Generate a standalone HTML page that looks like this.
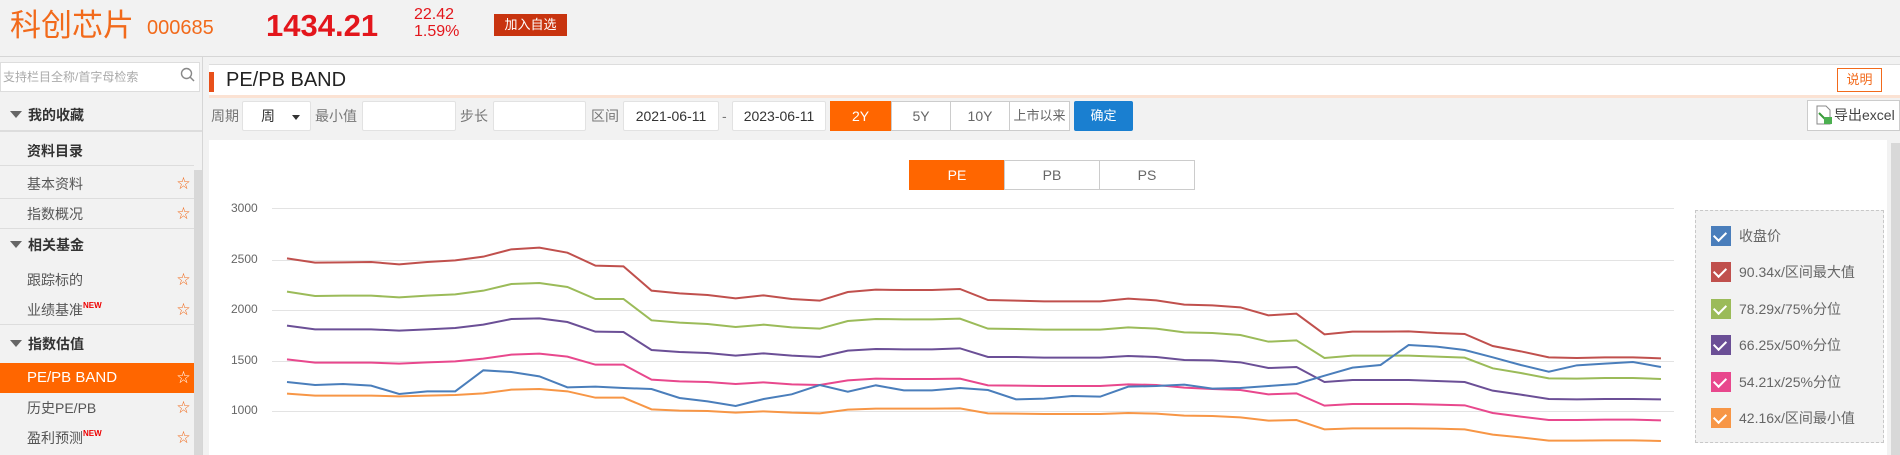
<!DOCTYPE html>
<html><head><meta charset="utf-8"><style>
*{margin:0;padding:0;box-sizing:border-box}
body{width:1900px;height:455px;overflow:hidden;background:#f2f2f2;font-family:"Liberation Sans","Noto Sans CJK SC",sans-serif;position:relative;color:#333}
.a{position:absolute;white-space:nowrap}
.row{position:absolute;left:0;width:194px;height:30px;line-height:30px;font-size:14px;color:#555;border-bottom:1px solid #ddd;padding-left:27px;overflow:hidden}
.star{position:absolute;right:4px;top:0;color:#f26a1b;font-size:13px;line-height:30px;height:30px}
.grp{font-weight:bold;color:#333;padding-left:10px}
.grp b{display:inline-block;width:0;height:0;border-left:6px solid transparent;border-right:6px solid transparent;border-top:7px solid #666;margin-right:6px;vertical-align:2px}
.new{color:#e00;font-size:8px;font-weight:bold;position:relative;top:-7px;line-height:0}
.inp{position:absolute;top:101px;height:30px;background:#fff;border:1px solid #e2e2e2;border-radius:2px;font-size:14px;line-height:28px;text-align:center;color:#333}
.lbl{position:absolute;top:101px;line-height:30px;font-size:14px;color:#777}
.yb{position:absolute;top:101px;height:30px;line-height:28px;text-align:center;font-size:14px;border:1px solid #ccc;background:#fff;color:#666}
.tab{position:absolute;top:160px;height:30px;line-height:28px;width:96px;text-align:center;font-size:14px;border:1px solid #ccc;background:#fff;color:#666}
.yl{position:absolute;left:231px;font-size:12px;color:#666}
.gl{position:absolute;left:272px;width:1402px;height:1px;background:#e3e3e3}
.lg{position:absolute;left:1711px;width:20px;height:20px}
.lg:after{content:"";position:absolute;left:5px;top:3px;width:6px;height:10px;border:solid #fff;border-width:0 2px 2px 0;transform:rotate(45deg)}
.lt{position:absolute;left:1739px;font-size:14px;color:#666;line-height:20px}
</style></head><body>
<div class="a" style="left:10px;top:6px;font-size:31px;color:#f26a1b;line-height:40px">科创芯片</div>
<div class="a" style="left:147px;top:15px;font-size:20px;color:#f26a1b;line-height:26px">000685</div>
<div class="a" style="left:266px;top:6px;font-size:31px;color:#e3161c;font-weight:bold;line-height:40px">1434.21</div>
<div class="a" style="left:414px;top:6px;font-size:16px;color:#e3161c;line-height:17px">22.42<br>1.59%</div>
<div class="a" style="left:494px;top:14px;width:73px;height:22px;background:#c8340f;color:#fff;font-size:13px;line-height:22px;text-align:center">加入自选</div>
<div class="a" style="left:0;top:56px;width:1900px;height:1px;background:#d6d6d6"></div>
<div class="a" style="left:0;top:62px;width:200px;height:30px;background:#fff;border:1px solid #ddd;font-size:12px;color:#aaa;line-height:28px;padding-left:2px">支持栏目全称/首字母检索</div>
<svg class="a" style="left:180px;top:67px" width="16" height="16"><circle cx="6.5" cy="6.5" r="5" fill="none" stroke="#888" stroke-width="1.4"/><line x1="10" y1="10" x2="14" y2="14" stroke="#888" stroke-width="1.5"/></svg>
<div class="a" style="left:202px;top:57px;width:1px;height:398px;background:#d6d6d6"></div>
<div class="row grp" style="top:98px;height:34px;line-height:34px;border-bottom:2px solid #ddd;width:202px"><b></b>我的收藏</div>
<div class="row" style="top:136px;font-weight:bold;color:#333">资料目录</div>
<div class="a" style="left:194px;top:170px;width:8px;height:285px;background:#d8d8d8"></div>
<div class="row" style="top:169px">基本资料<span class="star">☆</span></div>
<div class="row" style="top:199px">指数概况<span class="star">☆</span></div>
<div class="row grp" style="top:229px;height:33px;line-height:33px;border:0"><b></b>相关基金</div>
<div class="row" style="top:265px;border:0">跟踪标的<span class="star">☆</span></div>
<div class="row" style="top:295px">业绩基准<span class="new">NEW</span><span class="star">☆</span></div>
<div class="row grp" style="top:328px;height:33px;line-height:33px;border:0"><b></b>指数估值</div>
<div class="row" style="top:363px;background:#ff6600;color:#fff;font-size:15px;border:0">PE/PB BAND<span class="star" style="color:#fff">☆</span></div>
<div class="row" style="top:393px;border:0">历史PE/PB<span class="star">☆</span></div>
<div class="row" style="top:423px;border:0">盈利预测<span class="new">NEW</span><span class="star">☆</span></div>
<div class="a" style="left:209px;top:64px;width:1691px;height:32px;background:#fff;border-top:1px solid #ddd"></div>
<div class="a" style="left:209px;top:72px;width:5px;height:20px;background:#e8501a"></div>
<div class="a" style="left:226px;top:67px;font-size:20px;line-height:26px;color:#222">PE/PB BAND</div>
<div class="a" style="left:1837px;top:68px;width:45px;height:24px;border:1px solid #f26a1b;color:#f26a1b;font-size:13px;line-height:22px;text-align:center;background:#fff">说明</div>
<div class="a" style="left:209px;top:95px;width:1691px;height:3px;background:#fbe2d3"></div>
<div class="lbl" style="left:211px">周期</div>
<div class="inp" style="left:242px;width:69px;text-align:left;padding-left:18px">周<span style="position:absolute;right:10px;top:13px;border-left:4px solid transparent;border-right:4px solid transparent;border-top:5px solid #333"></span></div>
<div class="lbl" style="left:315px">最小值</div>
<div class="inp" style="left:362px;width:94px"></div>
<div class="lbl" style="left:460px">步长</div>
<div class="inp" style="left:493px;width:93px"></div>
<div class="lbl" style="left:591px">区间</div>
<div class="inp" style="left:623px;width:96px">2021-06-11</div>
<div class="lbl" style="left:722px">-</div>
<div class="inp" style="left:732px;width:94px">2023-06-11</div>
<div class="yb" style="left:830px;width:61px;background:#ff6600;border-color:#ff6600;color:#fff">2Y</div>
<div class="yb" style="left:891px;width:60px">5Y</div>
<div class="yb" style="left:950px;width:60px">10Y</div>
<div class="yb" style="left:1009px;width:61px;font-size:13px">上市以来</div>
<div class="yb" style="left:1074px;width:59px;background:#1a7fd0;border-color:#1a7fd0;color:#fff;border-radius:2px;font-size:13px">确定</div>
<div class="a" style="left:1807px;top:100px;width:93px;height:31px;background:#fff;border:1px solid #ccc;font-size:14px;line-height:29px;padding-left:26px;color:#444">导出excel</div>
<svg class="a" style="left:1814px;top:105px" width="20" height="20"><path d="M3 1h9l4 4v14H3z" fill="#fff" stroke="#888"/><path d="M5 8l6 6" stroke="#3a9a3a" stroke-width="2"/><rect x="10" y="12" width="8" height="7" fill="#4caf50"/></svg>
<div class="a" style="left:209px;top:140px;width:1678px;height:315px;background:#fff"></div>
<div class="a" style="left:1891px;top:143px;width:9px;height:312px;background:#d8d8d8"></div>
<div class="tab" style="left:909px;background:#ff6600;border-color:#ff6600;color:#fff">PE</div>
<div class="tab" style="left:1004px">PB</div>
<div class="tab" style="left:1099px">PS</div>
<div class="gl" style="top:208px"></div><div class="gl" style="top:260px"></div><div class="gl" style="top:310px"></div><div class="gl" style="top:361px"></div><div class="gl" style="top:411px"></div>
<div class="yl" style="top:201px">3000</div><div class="yl" style="top:252px">2500</div><div class="yl" style="top:302px">2000</div><div class="yl" style="top:353px">1500</div><div class="yl" style="top:403px">1000</div>
<svg class="a" style="left:0;top:0" width="1900" height="455">
<g transform="translate(287,230) scale(28.04,0.33333)" fill="none" stroke-width="2">
<polyline vector-effect="non-scaling-stroke" stroke="#c0504d" points="0,85 1,98 2,97 3,96 4,103 5,96 6,91 7,80 8,58 9,53 10,68 11,107 12,109 13,182 14,190 15,195 16,205 17,196 18,207 19,212 20,186 21,179 22,180 23,180 24,177 25,210 26,212 27,214 28,214 29,214 30,206 31,211 32,224 33,226 34,232 35,256 36,251 37,313 38,305 39,305 40,304 41,309 42,312 43,348 44,364 45,382 46,384 47,382 48,382 49,385"/>
<polyline vector-effect="non-scaling-stroke" stroke="#9bbb59" points="0,185 1,198 2,197 3,197 4,202 5,197 6,193 7,182 8,162 9,159 10,171 11,207 12,207 13,271 14,278 15,282 16,291 17,284 18,292 19,296 20,273 21,267 22,268 23,268 24,266 25,296 26,297 27,299 28,299 29,299 30,292 31,296 32,307 33,309 34,315 35,335 36,331 37,384 38,377 39,377 40,377 41,380 42,383 43,415 44,429 45,445 46,446 47,444 48,444 49,447"/>
<polyline vector-effect="non-scaling-stroke" stroke="#6b4f96" points="0,287 1,298 2,298 3,298 4,302 5,298 6,294 7,284 8,267 9,265 10,276 11,305 12,306 13,360 14,366 15,369 16,377 17,370 18,377 19,381 20,362 21,357 22,358 23,358 24,355 25,381 26,381 27,383 28,383 29,383 30,378 31,381 32,390 33,391 34,397 35,414 36,411 37,456 38,450 39,450 40,450 41,453 42,456 43,482 44,494 45,507 46,508 47,507 48,507 49,508"/>
<polyline vector-effect="non-scaling-stroke" stroke="#e8488d" points="0,388 1,398 2,398 3,398 4,401 5,397 6,394 7,386 8,374 9,371 10,380 11,404 12,404 13,449 14,454 15,456 16,462 17,457 18,463 19,465 20,451 21,446 22,447 23,447 24,446 25,466 26,467 27,468 28,468 29,468 30,463 31,465 32,473 33,477 34,480 35,493 36,490 37,527 38,522 39,522 40,522 41,524 42,526 43,549 44,560 45,570 46,570 47,569 48,569 49,571"/>
<polyline vector-effect="non-scaling-stroke" stroke="#f79646" points="0,491 1,497 2,497 3,497 4,499 5,497 6,495 7,490 8,479 9,477 10,484 11,503 12,503 13,538 14,542 15,543 16,548 17,544 18,548 19,550 20,539 21,536 22,536 23,536 24,535 25,550 26,551 27,552 28,552 29,552 30,549 31,551 32,557 33,558 34,562 35,572 36,570 37,598 38,595 39,595 40,595 41,596 42,598 43,614 44,622 45,632 46,632 47,631 48,631 49,633"/>
<polyline vector-effect="non-scaling-stroke" stroke="#4a7ebb" points="0,456 1,465 2,462 3,467 4,492 5,484 6,484 7,421 8,426 9,439 10,472 11,470 12,474 13,477 14,504 15,514 16,528 17,507 18,493 19,465 20,485 21,466 22,481 23,481 24,474 25,480 26,508 27,506 28,498 29,500 30,470 31,468 32,464 33,476 34,474 35,468 36,462 37,437 38,413 39,405 40,345 41,350 42,360 43,382 44,405 45,425 46,406 47,401 48,396 49,411"/>
</g></svg>
<div class="a" style="left:1695px;top:210px;width:189px;height:233px;background:#f2f2f2;border:1px dashed #c8c8c8"></div>
<div class="lg" style="top:226px;background:#4a7ebb"></div><div class="lt" style="top:226px">收盘价</div>
<div class="lg" style="top:262px;background:#c0504d"></div><div class="lt" style="top:262px">90.34x/区间最大值</div>
<div class="lg" style="top:299px;background:#9bbb59"></div><div class="lt" style="top:299px">78.29x/75%分位</div>
<div class="lg" style="top:335px;background:#6b4f96"></div><div class="lt" style="top:335px">66.25x/50%分位</div>
<div class="lg" style="top:372px;background:#e8488d"></div><div class="lt" style="top:372px">54.21x/25%分位</div>
<div class="lg" style="top:408px;background:#f79646"></div><div class="lt" style="top:408px">42.16x/区间最小值</div>
</body></html>
